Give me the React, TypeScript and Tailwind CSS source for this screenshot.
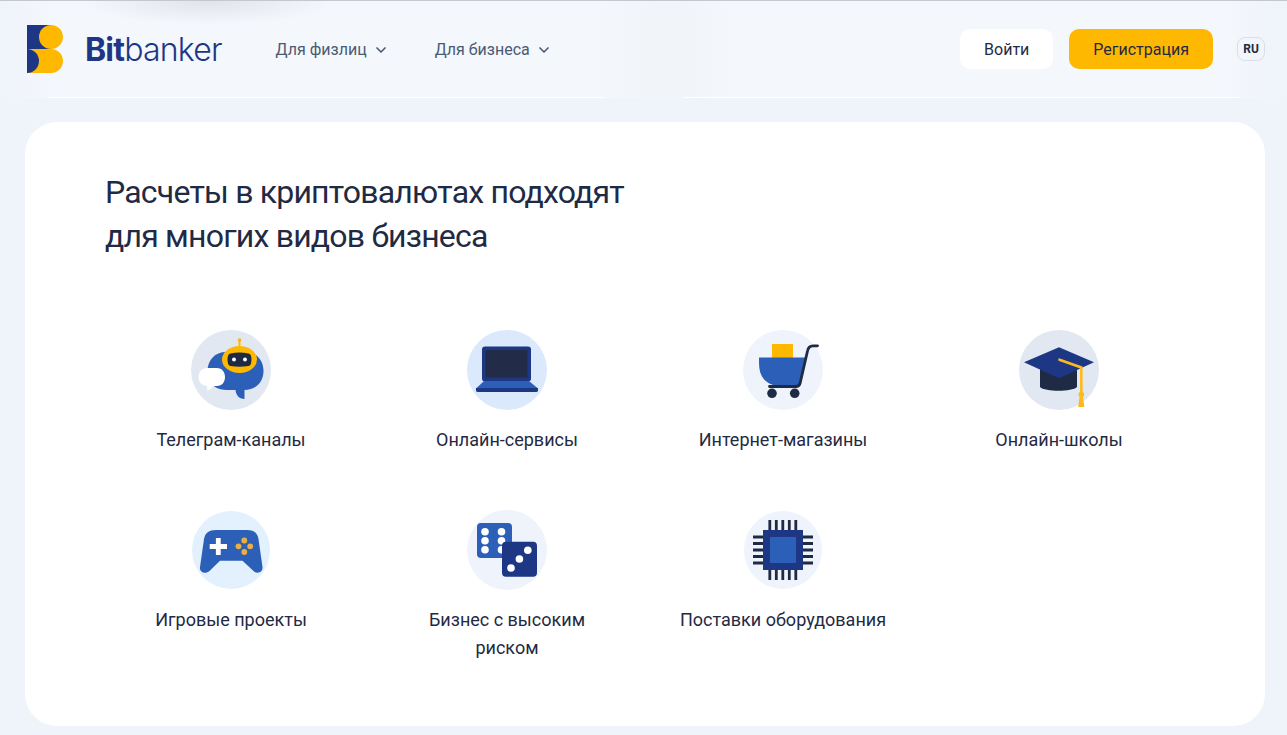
import type { ReactNode } from "react";
import { ChevronDown } from "lucide-react";

type Business = {
  title: string;
  icon: ReactNode;
}

const businesses: Business[] = [
  { title: "Телеграм-каналы", icon: <RobotIcon /> },
  { title: "Онлайн-сервисы", icon: <LaptopIcon /> },
  { title: "Интернет-магазины", icon: <CartIcon /> },
  { title: "Онлайн-школы", icon: <CapIcon /> },
  { title: "Игровые проекты", icon: <GamepadIcon /> },
  { title: "Бизнес с высоким риском", icon: <DiceIcon /> },
  { title: "Поставки оборудования", icon: <ChipIcon /> },
];

function IconBase({ children }: { children: ReactNode }) {
  return (
    <svg viewBox="0 0 80 80" className="size-20" fill="none" aria-hidden="true">
      {children}
    </svg>
  );
}

function RobotIcon() {
  return (
    <IconBase>
      <circle cx="40" cy="40" r="40" fill="#e1e8f2" />
      <path d="M35 22H54C66 22 72.500 31 72.500 41C72.500 53 64 60 53.500 60V69C48 69 45 65 44.500 60H35C23 60 16.500 51 16.500 41C16.500 30 24 22 35 22Z" fill="#2c60b8" />
      <path d="M48.500 11V18" stroke="#ffb800" strokeWidth="2" />
      <circle cx="48.500" cy="10" r="1.800" fill="#ffb800" />
      <ellipse cx="48.500" cy="29.500" rx="17.500" ry="13.500" fill="#ffb800" />
      <path d="M39.500 23.500Q48.500 21.500 57.500 23.500Q60.500 24 60.500 29.500Q60.500 35.500 57.500 36Q48.500 37.500 39.500 36Q36.500 35.500 36.500 29.500Q36.500 24 39.500 23.500Z" fill="#1f2a44" />
      <circle cx="43" cy="29.500" r="2" fill="#fff" />
      <circle cx="54" cy="29.500" r="2" fill="#fff" />
      <path d="M16 38H26C31 38 34 42 34 47C34 52 31 56 26 56H22Q20.500 59.500 16.500 61L16 56C11 56 7.500 52 7.500 47C7.500 42 11 38 16 38Z" fill="#fff" />
    </IconBase>
  );
}

function LaptopIcon() {
  return (
    <IconBase>
      <circle cx="40" cy="40" r="40" fill="#dbe9fc" />
      <rect x="15" y="16.500" width="49" height="35" rx="3" fill="#1e3785" />
      <rect x="18.500" y="20" width="42" height="27.500" rx="1" fill="#222c48" />
      <path d="M17 51H62L71 58.500H9Z" fill="#2c60b8" />
      <path d="M9 58H71V60.500Q71 62 69 62H11Q9 62 9 60.500Z" fill="#1e3785" />
    </IconBase>
  );
}

function CartIcon() {
  return (
    <IconBase>
      <circle cx="40" cy="40" r="40" fill="#eff3fb" />
      <path d="M29 14H50V28H29Z" fill="#ffb800" />
      <path d="M16 27.500H62.500L56 55H30C20 52 16 44 16 33Z" fill="#2c60b8" />
      <path d="M26.500 56.500H53Q56 56.500 57 53.500L64.500 21Q65.500 15.800 70 15.800H74.500" stroke="#1f2a44" strokeWidth="2.800" strokeLinecap="round" />
      <circle cx="29" cy="63.300" r="4.800" fill="#1f2a44" />
      <circle cx="51.700" cy="63.300" r="4.800" fill="#1f2a44" />
    </IconBase>
  );
}

function CapIcon() {
  return (
    <IconBase>
      <circle cx="40" cy="40" r="40" fill="#e1e8f2" />
      <path d="M21 38H58V57C53 62 26 62 21 57Z" fill="#1f2a44" />
      <path d="M5 32.300L40 17.200L75 32.300L40 48.200Z" fill="#1e3785" />
      <path d="M40.500 29.700L62.300 37.500V62" stroke="#fdb91e" strokeWidth="2.600" strokeLinecap="round" />
      <circle cx="62.300" cy="64.500" r="2.800" fill="#fdb91e" />
      <path d="M60.500 67H64L65.300 77H59.200Z" fill="#fdb91e" />
    </IconBase>
  );
}

function GamepadIcon() {
  return (
    <IconBase>
      <circle cx="40" cy="40" r="39" fill="#e3f0fe" />
      <path d="M25 20H56C63 20 66.500 23 67.500 29L71.500 57C72.200 62.500 66 64.500 62.500 61L51.500 50.800H29L18.500 61C14.500 64.500 8.200 62.500 9 57L13 29C14 23 18 20 25 20Z" fill="#2c60b8" />
      <path d="M27.300 28V45M18.700 36.500H36" stroke="#fff" strokeWidth="4.800" />
      <g fill="#ecae3c">
        <circle cx="53.300" cy="30.500" r="2.900" />
        <circle cx="47.500" cy="36.300" r="2.900" />
        <circle cx="59.200" cy="36.300" r="2.900" />
        <circle cx="53.300" cy="42" r="2.900" />
      </g>
    </IconBase>
  );
}

function DiceIcon() {
  return (
    <IconBase>
      <circle cx="40" cy="40" r="40" fill="#eff3fb" />
      <rect x="10" y="13" width="35" height="35" rx="4" fill="#2c60b8" />
      <g fill="#fff">
        <circle cx="18" cy="21.700" r="3.800" />
        <circle cx="18" cy="30.700" r="3.800" />
        <circle cx="18" cy="39.700" r="3.800" />
        <circle cx="34.500" cy="21.700" r="3.800" />
        <circle cx="34.500" cy="30.700" r="3.800" />
        <circle cx="34.500" cy="39.700" r="3.800" />
      </g>
      <rect x="35" y="31.800" width="35" height="35" rx="4" fill="#1e3785" />
      <g fill="#fff">
        <circle cx="44" cy="58" r="3.800" />
        <circle cx="52.400" cy="49" r="3.800" />
        <circle cx="60.800" cy="40.300" r="3.800" />
      </g>
    </IconBase>
  );
}

function ChipIcon() {
  return (
    <IconBase>
      <circle cx="40" cy="40" r="39" fill="#eff3fb" />
      <path
        d="M26.800 10V70M33.300 10V70M39.800 10V70M46.300 10V70M52.800 10V70M10 27H70M10 33.500H70M10 40H70M10 46.500H70M10 53H70"
        stroke="#1f2a44"
        strokeWidth="2.800"
      />
      <rect x="20" y="20" width="40" height="40" fill="#1e3785" />
      <rect x="27" y="27" width="26" height="26" fill="#2c60b8" />
    </IconBase>
  );
}

function Logo() {
  return (
    <a href="#" className="flex items-center gap-[22px] text-[#1e3785]" aria-label="Bitbanker">
      <svg viewBox="0 0 36 48" className="h-12 w-9" aria-hidden="true">
        <path d="M0 0H24V24H0Z" fill="#1e3785" />
        <circle cx="24" cy="12" r="12" fill="#ffb800" />
        <path d="M0 24H24A12 12 0 0 1 24 48H0Z" fill="#ffb800" />
        <path d="M0 24A12 12 0 0 1 0 48Z" fill="#1e3785" />
      </svg>
      <span className="pt-0.5 font-[Inter,sans-serif] text-[32px] leading-10 font-light tracking-tight">
        <b className="font-bold">Bit</b>banker
      </span>
    </a>
  );
}

function NavButton({ children }: { children: ReactNode }) {
  return (
    <button type="button" className="flex items-center gap-1.5 text-[#4b5b73]">
      {children}
      <ChevronDown className="size-4" strokeWidth={2.5} />
    </button>
  );
}

function Header() {
  return (
    <header className="relative border-t border-[#c3c7d0] bg-[linear-gradient(90deg,#eff3fa_0%,#f4f7fc_4%,#f4f7fc_46%,#f1f4f9_51%,#f1f4f9_53%,#f4f7fc_57%,#f4f7fc_95%,#eff3fa_100%)]">
      <div className="absolute top-0 left-20 h-6 w-64 bg-radial-[ellipse_at_top] from-[#e0e3e9] to-transparent to-70%" />
      <div className="relative flex h-24 items-center pr-[22px] pl-[27px]">
        <Logo />
        <nav className="ml-[54px] flex gap-[46px] pt-0.5">
          <NavButton>Для физлиц</NavButton>
          <NavButton>Для бизнеса</NavButton>
        </nav>
        <div className="ml-auto flex items-center">
          <button type="button" className="h-10 rounded-[10px] bg-white px-6 pt-0.5">Войти</button>
          <button type="button" className="ml-4 h-10 rounded-[10px] bg-[#ffb800] px-6 pt-0.5">Регистрация</button>
          <button type="button" className="ml-6 h-6 w-7 rounded-lg border border-[#d8deeb] text-xs font-bold">RU</button>
        </div>
      </div>
      <div className="flex gap-20 px-12">
        <div className="h-px flex-1 bg-white" />
        <div className="h-px flex-1 bg-white" />
      </div>
    </header>
  );
}

function App() {
  return (
    <div className="min-h-screen bg-[#eff3fa] font-[Roboto,sans-serif] text-base text-[#1f2a44]">
      <Header />
      <main className="pt-6 pr-[22px] pb-2 pl-[25px]">
        <section className="rounded-[32px] bg-white px-20 pt-12 pb-16">
          <h1 className="text-[32px] leading-11 tracking-tight">
            Расчеты в криптовалютах подходят
            <br />
            для многих видов бизнеса
          </h1>
          <ul className="mt-[72px] grid grid-cols-4 gap-x-6 gap-y-14">
            {businesses.map((item) => (
              <li key={item.title} className="flex flex-col items-center">
                {item.icon}
                <p className="mt-4 max-w-52 text-center text-lg leading-7">{item.title}</p>
              </li>
            ))}
          </ul>
        </section>
      </main>
    </div>
  );
}

export default App;
